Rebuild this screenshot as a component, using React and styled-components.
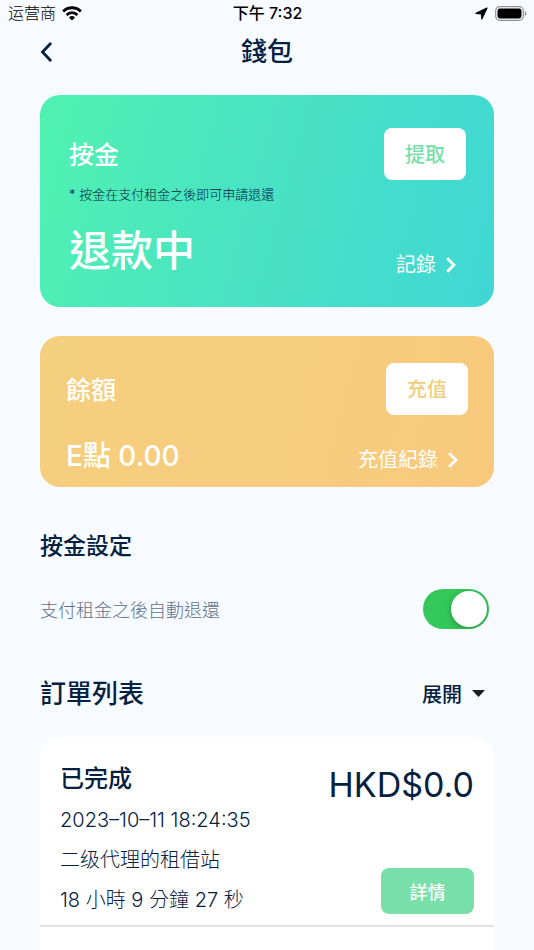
import React, { useState } from "react";
import styled, { createGlobalStyle } from "styled-components";

const orders = [
  {
    id: 1,
    status: "已完成",
    date: "2023–10–11 18:24:35",
    station: "二级代理的租借站",
    duration: "18 小時 9 分鐘 27 秒",
    price: "HKD$0.0",
  },
];

function WifiIcon() {
  return (
    <svg width="20" height="15" viewBox="0 0 20 15" fill="none" stroke="#000" strokeWidth="2.8">
      <path d="M1.2 5.4a12.4 12.4 0 0 1 17.6 0" />
      <path d="M4.6 8.9a7.6 7.6 0 0 1 10.8 0" />
      <path d="M10 14.6l-3-3.1a4.3 4.3 0 0 1 6 0z" fill="#000" stroke="none" />
    </svg>
  );
}

function LocationIcon() {
  return (
    <svg width="13" height="13" viewBox="0 0 13 13">
      <path
        d="M12 1L1 6.4L6.4 6.8L6.8 12z"
        fill="#000"
        stroke="#000"
        strokeWidth="1.2"
        strokeLinejoin="round"
      />
    </svg>
  );
}

function BatteryIcon() {
  return (
    <svg width="32" height="15" viewBox="0 0 32 15">
      <rect x="0.7" y="0.7" width="27.6" height="13.6" rx="4" fill="none" stroke="#8f9194" strokeWidth="1.2" />
      <rect x="2.5" y="2.5" width="24" height="10" rx="2.4" fill="#000" />
      <path d="M29.8 5v5c1-.4 1.6-1.4 1.6-2.5S30.8 5.4 29.8 5z" fill="#8f9194" />
    </svg>
  );
}

function BackIcon() {
  return (
    <svg width="12" height="20" viewBox="0 0 12 20" fill="none" stroke="#06213f" strokeWidth="2.8">
      <path d="M10.3 1.8L2.5 10l7.8 8.2" strokeLinecap="round" />
    </svg>
  );
}

function ArrowIcon() {
  return (
    <svg width="10" height="16" viewBox="0 0 10 16" fill="none" stroke="#fff" strokeWidth="2.8">
      <path d="M1.2 1.2L8 8l-6.8 6.8" />
    </svg>
  );
}

function CaretIcon() {
  return (
    <svg width="13" height="7" viewBox="0 0 13 7">
      <path d="M0 0h13L6.5 7z" fill="#1c1c1e" />
    </svg>
  );
}

function App() {
  const [autoRefund, setAutoRefund] = useState(true);

  return (
    <Page>
      <GlobalStyle />
      <StatusBar>
        <Carrier>
          运营商
          <WifiIcon />
        </Carrier>
        <Time>下午 7:32</Time>
        <Indicators>
          <LocationIcon />
          <BatteryIcon />
        </Indicators>
      </StatusBar>

      <Header>
        <BackButton aria-label="返回">
          <BackIcon />
        </BackButton>
        <Title>錢包</Title>
      </Header>

      <Main>
        <DepositCard>
          <CardInfo>
            <CardTitle>按金</CardTitle>
            <CardNote>* 按金在支付租金之後即可申請退還</CardNote>
            <DepositState>退款中</DepositState>
          </CardInfo>
          <CardActions>
            <CardButton $color="#79dfa8">提取</CardButton>
            <CardLink href="#">
              記錄
              <ArrowIcon />
            </CardLink>
          </CardActions>
        </DepositCard>

        <BalanceCard>
          <CardInfo>
            <CardTitle>餘額</CardTitle>
            <Balance>E點 0.00</Balance>
          </CardInfo>
          <CardActions>
            <CardButton $color="#f0cd7c">充值</CardButton>
            <CardLink href="#">
              充值紀錄
              <ArrowIcon />
            </CardLink>
          </CardActions>
        </BalanceCard>

        <SettingTitle>按金設定</SettingTitle>
        <SettingRow>
          <label htmlFor="auto-refund">支付租金之後自動退還</label>
          <Switch
            id="auto-refund"
            type="checkbox"
            checked={autoRefund}
            onChange={(e) => setAutoRefund(e.target.checked)}
          />
        </SettingRow>

        <OrderHeader>
          <OrderTitle>訂單列表</OrderTitle>
          <ExpandButton>
            展開
            <CaretIcon />
          </ExpandButton>
        </OrderHeader>
        <OrderList>
          {orders.map((order) => (
            <Order key={order.id}>
              <div>
                <OrderStatus>{order.status}</OrderStatus>
                <OrderText>{order.date}</OrderText>
                <OrderText>{order.station}</OrderText>
                <OrderText>{order.duration}</OrderText>
              </div>
              <OrderSide>
                <Price>{order.price}</Price>
                <DetailButton>詳情</DetailButton>
              </OrderSide>
            </Order>
          ))}
        </OrderList>
      </Main>
    </Page>
  );
}

export default App;

const GlobalStyle = createGlobalStyle`
  * {
    box-sizing: border-box;
  }

  body {
    margin: 0;
    background: #f7faff;
    color: #06213f;
    font-family: Inter, "Noto Sans CJK TC", sans-serif;
  }

  h1, h2, h3, p, ul {
    margin: 0;
    padding: 0;
  }

  button {
    border: none;
    padding: 0;
    background: none;
    color: inherit;
    font: inherit;
    cursor: pointer;
  }

  svg {
    display: block;
    flex-shrink: 0;
  }
`;

const Page = styled.div`
  min-height: 100vh;
  display: flex;
  flex-direction: column;
`;

const StatusBar = styled.div`
  display: grid;
  grid-template-columns: 1fr auto 1fr;
  align-items: center;
  height: 28px;
  padding: 0 7px 2px 8px;
  color: #000;
  font-size: 16px;
  line-height: 26px;
`;

const Carrier = styled.div`
  display: flex;
  align-items: center;
  gap: 6px;
  font-family: Inter, "Noto Sans CJK SC", sans-serif;
  font-weight: 300;
`;

const Time = styled.div`
  font-weight: 500;
`;

const Indicators = styled.div`
  display: flex;
  align-items: center;
  justify-content: flex-end;
  gap: 7px;
`;

const Header = styled.header`
  display: grid;
  grid-template-columns: 1fr auto 1fr;
  align-items: center;
  height: 46px;
  padding: 2px 40px 0;
`;

const BackButton = styled.button`
  justify-self: start;
`;

const Title = styled.h1`
  font-size: 26px;
  font-weight: 500;
  line-height: 36px;
`;

const Main = styled.main`
  flex: 1;
  display: flex;
  flex-direction: column;
  padding: 21px 40px 0;
`;

const Card = styled.section`
  display: flex;
  justify-content: space-between;
  border-radius: 20px;
  color: #fff;
`;

const DepositCard = styled(Card)`
  padding: 33px 28px 28px 29px;
  background: linear-gradient(105deg, #50f2b1, #48e2c4 50%, #40d7d4);
`;

const BalanceCard = styled(Card)`
  margin-top: 29px;
  padding: 27px 26px 13px;
  background: linear-gradient(105deg, #f4cf7e, #f8c97d);
`;

const CardInfo = styled.div`
  padding-top: 9px;
`;

const CardTitle = styled.h2`
  font-size: 25px;
  font-weight: 500;
  line-height: 36px;
`;

const CardNote = styled.p`
  margin-top: 11px;
  color: #06213f;
  font-size: 13px;
  font-weight: 300;
  line-height: 20px;
`;

const DepositState = styled.p`
  margin-top: 19px;
  font-size: 42px;
  font-weight: 500;
  line-height: 56px;
`;

const Balance = styled.p`
  margin-top: 30px;
  font-size: 28px;
  font-weight: 500;
  line-height: 36px;
`;

const CardActions = styled.div`
  display: flex;
  flex-direction: column;
  align-items: flex-end;
  justify-content: space-between;
`;

const CardButton = styled.button`
  width: 82px;
  height: 52px;
  padding-bottom: 2px;
  border-radius: 8px;
  background: #fff;
  color: ${(props) => props.$color};
  font-size: 20px;
  font-weight: 500;
`;

const CardLink = styled.a`
  display: flex;
  align-items: center;
  gap: 10px;
  padding-right: 10px;
  color: #fff;
  font-size: 20px;
  line-height: 28px;
  text-decoration: none;
`;

const SettingTitle = styled.h2`
  margin-top: 43px;
  font-size: 23px;
  font-weight: 500;
  line-height: 32px;
`;

const SettingRow = styled.div`
  display: flex;
  align-items: center;
  justify-content: space-between;
  margin-top: 27px;
  padding-right: 5px;
  color: #5f728c;
  font-size: 18px;
  font-weight: 300;
`;

const Switch = styled.input`
  appearance: none;
  width: 66px;
  height: 40px;
  margin: 0;
  padding: 2px;
  border-radius: 20px;
  background: ${(props) => (props.checked ? "#34c759" : "#d8dce2")};
  overflow: hidden;
  cursor: pointer;

  &::after {
    content: "";
    display: block;
    width: 36px;
    height: 36px;
    margin-left: ${(props) => (props.checked ? "26px" : "0")};
    border-radius: 50%;
    background: #fff;
    box-shadow: 0 2px 6px rgba(0, 0, 0, 0.25);
  }
`;

const OrderHeader = styled.div`
  display: flex;
  align-items: center;
  justify-content: space-between;
  margin-top: 47px;
  padding-right: 9px;
`;

const OrderTitle = styled.h2`
  font-size: 26px;
  font-weight: 500;
  line-height: 36px;
`;

const ExpandButton = styled.button`
  display: flex;
  align-items: center;
  gap: 10px;
  padding-bottom: 2px;
  font-size: 20px;
  font-weight: 500;
`;

const OrderList = styled.ul`
  flex: 1;
  margin-top: 25px;
  border-radius: 20px 20px 0 0;
  background: #fff;
  list-style: none;
`;

const Order = styled.li`
  display: flex;
  justify-content: space-between;
  padding: 24px 20px 5px;
  border-bottom: 2px solid #e3e3e3;
`;

const OrderStatus = styled.h3`
  margin-bottom: 3px;
  font-size: 24px;
  font-weight: 500;
  line-height: 36px;
`;

const OrderText = styled.p`
  font-size: 20px;
  font-weight: 300;
  line-height: 40px;
`;

const OrderSide = styled.div`
  display: flex;
  flex-direction: column;
  align-items: flex-end;
  justify-content: space-between;
  padding: 4px 0 6px;
`;

const Price = styled.p`
  font-size: 34px;
  line-height: 40px;
`;

const DetailButton = styled.button`
  width: 93px;
  height: 46px;
  border-radius: 8px;
  background: #79dfa8;
  color: #fff;
  font-size: 18px;
  font-weight: 500;
`;
